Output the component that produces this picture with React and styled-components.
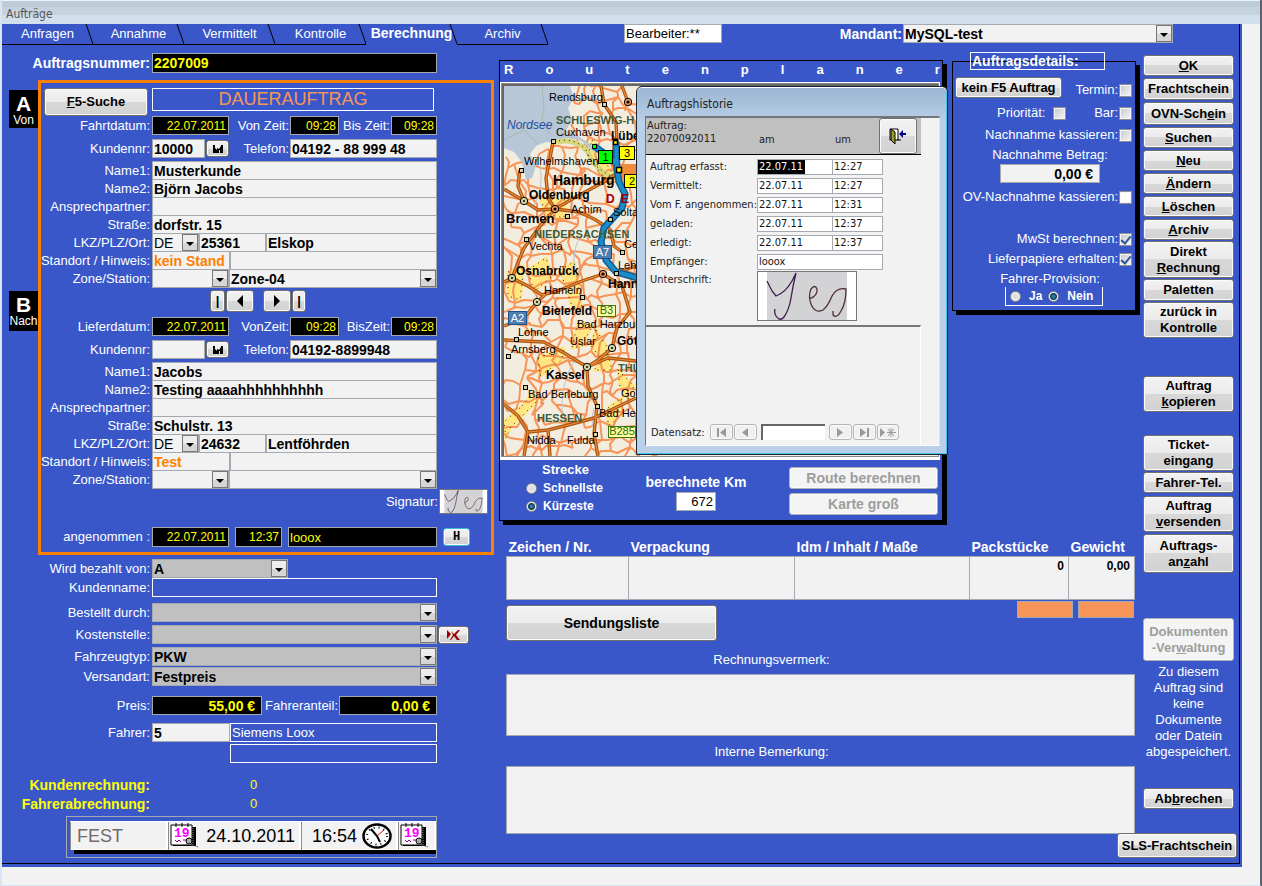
import React from 'react'
import styled, { createGlobalStyle, css } from 'styled-components'

const colors = {
  form: '#3957c9',
  field: '#f2f2f2',
  border: '#a5a9b0',
  gray: '#c0c0c0',
  yellow: '#ffff00',
  orange: '#ff8000',
  peach: '#f79457',
}

const GlobalStyle = createGlobalStyle`
  * {
    box-sizing: border-box;
  }
  body {
    margin: 0;
    background: #f2f2f2;
    font-family: 'Liberation Sans', Arial, sans-serif;
    font-size: 13px;
    line-height: 16px;
  }
  input, select, button, textarea {
    font: inherit;
    color: inherit;
    margin: 0;
    border-radius: 0;
  }
`

/* ---------- window ---------- */

const Window = styled.div`
  display: flex;
  flex-direction: column;
  min-height: 100vh;
  border: solid #d9e6f2;
  border-width: 0 2px 2px;
  border-right-color: #59626e;
`

const TitleBar = styled.header`
  height: 24px;
  padding: 5px 4px 0;
  border-top: 1px solid #eef3f7;
  background: linear-gradient(#bccbd8 0 6px, #c5d3df 6px 14px, #d2e0ed 14px);
  color: #555;
  font-family: 'DejaVu Sans Condensed', 'DejaVu Sans', sans-serif;
  font-size: 12px;
`

const Form = styled.main`
  flex: 1;
  display: flex;
  margin: 0 18px 18px 0;
  padding: 0 2px 3px 0;
  background: ${colors.form};
  color: #fff;
`

const FormInner = styled.div`
  flex: 1;
  display: flex;
  flex-direction: column;
  border: solid #000;
  border-width: 0 1px 1px 0;
`

const Body = styled.div`
  flex: 1;
  display: flex;
`

/* ---------- shared controls ---------- */

const dark = css`
  background: #000;
  color: ${colors.yellow};
`

const Field = styled.input`
  width: ${p => (p.$w ? `${p.$w}px` : 'auto')};
  flex: ${p => (p.$w ? 'none' : '1')};
  min-width: 0;
  height: ${p => p.$h || 19}px;
  padding: 0 2px 0 1px;
  border: 1px solid ${colors.border};
  background: ${colors.field};
  color: ${p => p.$color || '#000'};
  font-size: ${p => p.$size || 14}px;
  font-weight: ${p => (p.$light ? 400 : 700)};
  text-align: ${p => (p.$right ? 'right' : 'left')};
  ${p => p.$dark && dark}
  ${p =>
    p.$outline &&
    css`
      border-color: #fff;
      background: transparent;
      color: #fff;
    `}
`

const SelectBox = styled.span`
  display: grid;
  width: ${p => (p.$w ? `${p.$w}px` : 'auto')};
  flex: ${p => (p.$w ? 'none' : '1')};
  height: 19px;
  > * {
    grid-area: 1 / 1;
  }
  select {
    appearance: none;
    width: 100%;
    padding: 0 18px 0 1px;
    border: 1px solid ${colors.border};
    background: ${p => (p.$gray ? colors.gray : colors.field)};
    color: #000;
    font-size: 14px;
    font-weight: ${p => (p.$light ? 400 : 700)};
  }
`

const Arrow = styled.svg`
  justify-self: end;
  align-self: center;
  margin-right: 1px;
  pointer-events: none;
`

const Select = ({ id, value = '', label, ...rest }) => (
  <SelectBox {...rest}>
    <select id={id} aria-label={label} defaultValue={value}>
      <option>{value}</option>
    </select>
    <Arrow width="16" height="17" viewBox="0 0 16 17">
      <rect x=".5" y=".5" width="15" height="16" fill="#ededed" stroke="#777" />
      <rect x="1" y="9" width="14" height="7" fill="#d6d6d6" />
      <path d="M4 8h8l-4 4z" fill="#000" />
    </Arrow>
  </SelectBox>
)

const Button = styled.button`
  display: flex;
  align-items: center;
  justify-content: center;
  flex: none;
  width: ${p => (p.$w ? `${p.$w}px` : 'auto')};
  height: ${p => p.$h || 21}px;
  margin-top: ${p => p.$top || 0}px;
  padding: 0;
  border: 1px solid #707070;
  border-radius: 3px;
  background: linear-gradient(#f2f2f2, #ebebeb 50%, #d8d8d8 50%, #d2d2d2);
  box-shadow: inset 0 0 0 1px #fbfbfb;
  color: #000;
  font-size: ${p => p.$size || 13}px;
  font-weight: 700;
  line-height: 16px;
  text-align: center;
  white-space: pre-line;
  &:disabled {
    border-color: #adb2b5;
    background: #f4f4f4;
    color: #9d9d9d;
  }
`

const CheckBox = styled.input.attrs({ type: 'checkbox' })`
  appearance: none;
  display: grid;
  place-items: center;
  flex: none;
  width: 13px;
  height: 13px;
  border: 1px solid #8e8f8f;
  background: ${p =>
    p.$plain ? '#fff' : 'linear-gradient(135deg, #c5c9cd, #f6f6f6)'};
  box-shadow: inset 0 0 0 1px #f4f4f4;
  &:checked::after {
    content: '';
    width: 4px;
    height: 8px;
    border: solid #31559b;
    border-width: 0 2px 2px 0;
    transform: rotate(40deg);
  }
`

const Radio = styled.input.attrs({ type: 'radio' })`
  appearance: none;
  flex: none;
  width: 11px;
  height: 11px;
  border: 1px solid #8e8f8f;
  border-radius: 50%;
  background: radial-gradient(#d8d8d8, #f4f4f4);
  &:checked {
    background: radial-gradient(#2b7fb0 0 1px, #16364d 3px, #f4f4f4 4px);
  }
`

/* ---------- header ---------- */

const Header = styled.div`
  display: flex;
  height: 21px;
`

const Tab = styled.button`
  display: flex;
  width: 91px;
  height: 21px;
  padding: 0;
  border: 0;
  border-bottom: 1px solid ${p => (p.$active ? 'transparent' : '#000')};
  background: none;
  font-size: ${p => (p.$active ? 14 : 13)}px;
  font-weight: ${p => (p.$active ? 700 : 400)};
  line-height: 19px;
  span {
    flex: 1;
    margin-right: -5px;
  }
  svg {
    flex: none;
    margin-left: -3px;
  }
`

const Editor = styled(Field)`
  margin-left: 76px;
  background: #fff;
`

const ClientLabel = styled.label`
  margin-left: auto;
  padding: 2px 1px 0 0;
  font-size: 14px;
  font-weight: 700;
`

const ClientSelect = styled.div`
  display: flex;
  width: 270px;
  margin-right: 66px;
`

const TABS = ['Anfragen', 'Annahme', 'Vermittelt', 'Kontrolle', 'Berechnung', 'Archiv']

const Top = () => (
  <Header>
    {TABS.map(name => (
      <Tab key={name} type="button" $active={name === 'Berechnung'}>
        <span>{name}</span>
        <svg width="8" height="20" viewBox="0 0 8 20">
          <path d="M1 0L8 20" stroke="#000" fill="none" />
        </svg>
      </Tab>
    ))}
    <Editor $w={98} $light $size={13} defaultValue="Bearbeiter:**" aria-label="Bearbeiter" />
    <ClientLabel htmlFor="mandant">Mandant:</ClientLabel>
    <ClientSelect>
      <Select id="mandant" value="MySQL-test" />
    </ClientSelect>
  </Header>
)

/* ---------- left column ---------- */

const Left = styled.section`
  flex: none;
  width: 496px;
  display: flex;
  flex-direction: column;
`

const Outer = styled.div`
  padding-left: 39px;
`

const Framed = styled.div`
  display: flex;
  margin-top: 7px;
`

const Side = styled.div`
  width: 36px;
  padding: 10px 0 0 7px;
`

const SideTab = styled.div`
  height: ${p => p.$h}px;
  margin-bottom: 163px;
  padding-top: 4px;
  background: #000;
  font-size: 12px;
  line-height: 14px;
  text-align: center;
  b {
    display: block;
    font-size: 21px;
    line-height: 19px;
  }
`

const Frame = styled.div`
  width: 456px;
  padding: 5px 0 5px;
  border: 3px solid ${colors.orange};
`

const Row = styled.div`
  display: flex;
  align-items: center;
  height: ${p => p.$h || 19}px;
  margin-top: ${p => p.$top || 0}px;
`

const Label = styled.label`
  display: flex;
  justify-content: flex-end;
  flex: none;
  width: ${p => p.$w || 110}px;
  padding-right: 1px;
  white-space: nowrap;
  color: ${p => p.$color || '#fff'};
  font-size: ${p => (p.$bold ? 14 : 13)}px;
  font-weight: ${p => (p.$bold ? 700 : 400)};
`

const Cells = styled.div`
  display: flex;
  align-items: center;
  width: 286px;
  padding-left: 1px;
`

const Banner = styled.div`
  align-self: flex-start;
  width: 282px;
  height: 23px;
  margin-left: 4px;
  border: 1px solid #fff;
  color: ${colors.peach};
  font-size: 18px;
  line-height: 21px;
  text-align: center;
`

const Search = styled(Button)`
  margin-left: 3px;
`

const Merge = styled(Button)`
  margin: 0 1px;
`

const Nav = styled.div`
  display: flex;
  gap: 1px;
  height: 23px;
  margin: 2px 0 0 169px;
  button:nth-child(3) {
    margin-left: 8px;
  }
`

const Text = ({ id, label, value, top = -1 }) => (
  <Row $top={top}>
    <Label htmlFor={id}>{label}</Label>
    <Cells>
      <Field id={id} defaultValue={value} />
    </Cells>
  </Row>
)

const MergeIcon = () => (
  <svg width="12" height="8" viewBox="0 0 12 8">
    <path d="M1 0h2v3l2 2V3l2 1 2-3V0h2v8H8V5H7v3H1z" fill="#000" />
  </svg>
)

const Address = ({ prefix, date, from, to, customer, phone, names, zip, city, hint, zone }) => (
  <>
    <Row $top={prefix === 'b' ? 4 : 0}>
      <Label htmlFor={`${prefix}-date`}>{date}</Label>
      <Cells>
        <Field id={`${prefix}-date`} $w={77} $dark $light $right $size={12} defaultValue="22.07.2011" />
        <Label htmlFor={`${prefix}-from`} $w={61}>{from}</Label>
        <Field id={`${prefix}-from`} $w={49} $dark $light $right $size={12} defaultValue="09:28" />
        <Label htmlFor={`${prefix}-to`} $w={52}>{to}</Label>
        <Field id={`${prefix}-to`} $dark $light $right $size={12} defaultValue="09:28" />
      </Cells>
    </Row>
    <Row $top={4}>
      <Label htmlFor={`${prefix}-nr`}>Kundennr:</Label>
      <Cells>
        <Field id={`${prefix}-nr`} $w={53} defaultValue={customer} />
        <Merge type="button" $w={23} $h={17} aria-label="Kunde suchen">
          <MergeIcon />
        </Merge>
        <Label htmlFor={`${prefix}-phone`} $w={60}>Telefon:</Label>
        <Field id={`${prefix}-phone`} defaultValue={phone} />
      </Cells>
    </Row>
    <Text id={`${prefix}-n1`} label="Name1:" value={names[0]} top={3} />
    <Text id={`${prefix}-n2`} label="Name2:" value={names[1]} />
    <Text id={`${prefix}-contact`} label="Ansprechpartner:" />
    <Text id={`${prefix}-street`} label="Straße:" value={names[2]} />
    <Row $top={-1}>
      <Label htmlFor={`${prefix}-lkz`}>LKZ/PLZ/Ort:</Label>
      <Cells>
        <Select id={`${prefix}-lkz`} $w={47} $light value="DE" />
        <Field $w={67} defaultValue={zip} aria-label="PLZ" />
        <Field defaultValue={city} aria-label="Ort" />
      </Cells>
    </Row>
    <Row $top={-1}>
      <Label htmlFor={`${prefix}-hint`}>Standort / Hinweis:</Label>
      <Cells>
        <Field id={`${prefix}-hint`} $w={78} $color={colors.orange} defaultValue={hint} />
        <Field aria-label="Hinweis" />
      </Cells>
    </Row>
    <Row $top={-1}>
      <Label htmlFor={`${prefix}-zone`}>Zone/Station:</Label>
      <Cells>
        <Select id={`${prefix}-zone`} $w={77} />
        <Select label="Station" value={zone} />
      </Cells>
    </Row>
  </>
)

const Accepted = styled(Row)`
  gap: 6px;
  > label {
    margin-right: -5px;
  }
`

const Signed = styled(Row)`
  justify-content: flex-end;
  padding-right: 3px;
`

const Cyan = styled(Button)`
  border-color: #3cb8dc;
  font-family: 'Liberation Mono', monospace;
`

const SignatureFrame = styled.svg`
  flex: none;
  border: 1px solid #777;
  background: #fff;
`

const Signature = ({ width, height }) => (
  <SignatureFrame width={width} height={height} viewBox="0 0 98 48" role="img" aria-label="Unterschrift">
    <rect x="9" width="80" height="48" fill="#d3d3d5" />
    <g fill="none" strokeWidth="1.3">
      <path d="M9 9L14 19L18 24Q27 21 34 9L38 1Q35 13 33 26Q31 38 26 45Q22 50 18 44Q16 41 17 37" stroke="#3b1c4d" />
      <path d="M51 27Q60 24 59 17Q57 12 53 17Q50 24 53 32Q57 42 65 38Q70 34 74 24Q79 15 88 17Q88 31 83 39Q79 47 75 43L75 39" stroke="#4b3038" />
    </g>
  </SignatureFrame>
)

const Small = styled.span`
  width: 10px;
  color: ${colors.yellow};
  margin-left: 99px;
`

const Bar = styled.div`
  width: 371px;
  margin: 3px 0 0 64px;
  padding: 4px 0 3px 3px;
  border: 1px solid ${colors.border};
`

const BarCells = styled.div`
  display: flex;
  height: 29px;
  border-top: 1px solid #fff;
  background: ${colors.field};
  box-shadow: inset 0 -1px #fff;
  color: #000;
  font-size: 18px;
`

const BarShadow = styled.div`
  height: 4px;
  margin-left: 4px;
  background: #000;
`

const BarCell = styled.div`
  display: flex;
  align-items: center;
  justify-content: ${p => p.$align || 'space-between'};
  flex: ${p => (p.$w ? 'none' : '1')};
  width: ${p => (p.$w ? `${p.$w}px` : 'auto')};
  padding: 0 4px 0 1px;
  border-left: 1px solid #8a8a8a;
  border-right: 2px solid #fff;
  color: ${p => (p.$muted ? '#6d6d6d' : '#000')};
  &:first-child {
    padding-left: 6px;
  }
`

const CalendarButton = styled.button`
  padding: 0;
  border: 0;
  background: none;
  line-height: 0;
`

const Calendar = () => (
  <CalendarButton type="button" aria-label="Kalender">
    <svg width="30" height="26" viewBox="0 0 30 26">
      <path d="M3 4h23v19H3z" fill="#000" />
      <path d="M1 2h21v20H1z" fill="#fff" stroke="#000" />
      <path d="M6 0v4M12 0v4M18 0v4" stroke="#000" />
      <path d="M23 5v18" stroke="#999" strokeDasharray="1 1" />
      <text x="4" y="14" fontFamily="Liberation Mono" fontSize="13" fontWeight="700" fill="#f0f">19</text>
      <path d="M5 17l2 2 2-2 2 2M13 17h3" stroke="#808" fill="none" />
      <circle cx="19" cy="18" r="3" fill="#aaa" stroke="#000" />
      <path d="M16 22l3-2 3 2 6 2" stroke="#555" fill="none" strokeDasharray="2 1" />
    </svg>
  </CalendarButton>
)

const Clock = () => (
  <svg width="30" height="26" viewBox="0 0 30 26">
    <ellipse cx="15" cy="13" rx="13.5" ry="11.5" fill="#fff" stroke="#000" strokeWidth="2.5" />
    <ellipse cx="15" cy="13" rx="10" ry="8.5" fill="none" stroke="#000" strokeWidth="2" strokeDasharray="1 4" />
    <path d="M9 6l6 7 3 6" stroke="#000" strokeWidth="2" fill="none" />
    <path d="M15 13l7-6" stroke="#e00" />
  </svg>
)

const Billing = () => (
  <Outer>
    <Row $top={4}>
      <Label htmlFor="payer">Wird bezahlt von:</Label>
      <Cells><Select id="payer" $w={136} $gray value="A" /></Cells>
    </Row>
    <Row>
      <Label htmlFor="payer-name">Kundenname:</Label>
      <Cells><Field id="payer-name" $outline /></Cells>
    </Row>
    <Row $top={6}>
      <Label htmlFor="ordered">Bestellt durch:</Label>
      <Cells><Select id="ordered" $gray /></Cells>
    </Row>
    <Row $top={3}>
      <Label htmlFor="cost">Kostenstelle:</Label>
      <Cells><Select id="cost" $gray /></Cells>
      <Merge type="button" $w={31} $h={18} aria-label="Kostenstelle löschen">
        <svg width="16" height="10" viewBox="0 0 16 10">
          <path d="M1 0l4 4-4 5zM5 1l3 3 4-4h2l-4 5 4 5h-3L8 6l-3 4H4l3-5z" fill="#900" />
        </svg>
      </Merge>
    </Row>
    <Row $top={3}>
      <Label htmlFor="vehicle">Fahrzeugtyp:</Label>
      <Cells><Select id="vehicle" $gray value="PKW" /></Cells>
    </Row>
    <Row $top={1}>
      <Label htmlFor="shipping">Versandart:</Label>
      <Cells><Select id="shipping" $gray value="Festpreis" /></Cells>
    </Row>
    <Row $top={10}>
      <Label htmlFor="price">Preis:</Label>
      <Cells>
        <Field id="price" $w={110} $dark $right defaultValue="55,00 € " />
        <Label htmlFor="share" $w={77}>Fahreranteil:</Label>
        <Field id="share" $dark $right defaultValue="0,00 € " />
      </Cells>
    </Row>
    <Row $top={8}>
      <Label htmlFor="driver">Fahrer:</Label>
      <Cells>
        <Field id="driver" $w={78} defaultValue="5" />
        <Field $outline $light $size={13} defaultValue="Siemens Loox" aria-label="Fahrername" />
      </Cells>
    </Row>
    <Row $top={2}>
      <Label as="span" $w={188} />
      <Cells as="span"><Field $w={207} $outline aria-label="Fahrer Zusatz" /></Cells>
    </Row>
    <Row $top={12}>
      <Label as="span" $bold $color={colors.yellow}>Kundenrechnung:</Label>
      <Small>0</Small>
    </Row>
    <Row>
      <Label as="span" $bold $color={colors.yellow}>Fahrerabrechnung:</Label>
      <Small>0</Small>
    </Row>
  </Outer>
)

const LeftColumn = () => (
  <Left>
    <Outer>
      <Row $top={8} $h={20}>
        <Label htmlFor="order" $bold>Auftragsnummer:</Label>
        <Cells><Field id="order" $dark $h={20} defaultValue="2207009" /></Cells>
      </Row>
    </Outer>
    <Framed>
      <Side>
        <SideTab $h={38}><b>A</b>Von</SideTab>
        <SideTab $h={40}><b>B</b>Nach</SideTab>
      </Side>
      <Frame>
        <Row $h={28}>
          <Search type="button" $w={104} $h={28}><span><u>F</u>5-Suche</span></Search>
          <Banner>DAUERAUFTRAG</Banner>
        </Row>
        <Address
          prefix="a"
          date="Fahrtdatum:"
          from="Von Zeit:"
          to="Bis Zeit:"
          customer="10000"
          phone="04192 - 88 999 48"
          names={['Musterkunde', 'Björn Jacobs', 'dorfstr. 15']}
          zip="25361"
          city="Elskop"
          hint="kein Stand"
          zone="Zone-04"
        />
        <Nav>
          <Button type="button" $w={15} $h={22} aria-label="Erster">|</Button>
          <Button type="button" $w={28} $h={22} aria-label="Zurück">
            <svg width="8" height="12"><path d="M7 0v12L1 6z" /></svg>
          </Button>
          <Button type="button" $w={28} $h={22} aria-label="Weiter">
            <svg width="8" height="12"><path d="M1 0v12l6-6z" /></svg>
          </Button>
          <Button type="button" $w={14} $h={22} aria-label="Letzter">|</Button>
        </Nav>
        <Address
          prefix="b"
          date="Lieferdatum:"
          from="VonZeit:"
          to="BisZeit:"
          customer=""
          phone="04192-8899948"
          names={['Jacobs', 'Testing aaaahhhhhhhhhh', 'Schulstr. 13']}
          zip="24632"
          city="Lentföhrden"
          hint="Test"
          zone=""
        />
        <Signed $h={25}>
          <Label as="span">Signatur:</Label>
          <Signature width="49" height="25" />
        </Signed>
        <Accepted $top={13} $h={20}>
          <Label htmlFor="accepted">angenommen :</Label>
          <Field id="accepted" $w={77} $h={20} $dark $light $right $size={12} defaultValue="22.07.2011" />
          <Field $w={47} $h={20} $dark $light $right $size={12} defaultValue="12:37" aria-label="Uhrzeit" />
          <Field $w={149} $h={20} $dark $light $size={13} defaultValue="looox" aria-label="Empfänger" />
          <Cyan type="button" $w={27} $h={18} $size={12}>H</Cyan>
        </Accepted>
      </Frame>
    </Framed>
    <Billing />
    <Bar>
      <BarCells>
        <BarCell $w={98} $muted>FEST</BarCell>
        <BarCell $w={133}><Calendar />24.10.2011</BarCell>
        <BarCell $w={97} $align="flex-end">16:54&nbsp;<Clock /></BarCell>
        <BarCell><Calendar /></BarCell>
      </BarCells>
      <BarShadow />
    </Bar>
  </Left>
)

/* ---------- route map ---------- */

// small deterministic generator for the minor road mesh
const noise = (x, y) => {
  const v = Math.sin(x * 127 + y * 311) * 43758
  return v - Math.floor(v)
}

const isSea = (x, y) => (x < 66 && y < 46) || (x < 46 && y < 62) || (x > 10 && x < 30 && y < 94)

const minorRoads = () => {
  const step = 14
  const point = (i, j) => [
    Math.round(i * step + noise(i, j) * 13 - 6),
    Math.round(j * step + noise(j + 40, i) * 13 - 6),
  ]
  let d = ''
  for (let i = 0; i < 11; i += 1) {
    for (let j = 0; j < 27; j += 1) {
      const [x, y] = point(i, j)
      const targets = [point(i + 1, j), point(i, j + 1)]
      targets.forEach(([tx, ty], k) => {
        if (isSea(x, y) || isSea(tx, ty) || noise(i + k * 9, j + 17) < 0.14) return
        const mx = Math.round((x + tx) / 2 + noise(i, j + k) * 8 - 4)
        const my = Math.round((y + ty) / 2 + noise(j, i + k) * 8 - 4)
        d += `M${x} ${y}L${mx} ${my}L${tx} ${ty}`
      })
    }
  }
  return d
}

const MAJOR_ROADS =
  'M49 56L46 72L42 92L44 112L51 123M0 103L20 115L34 124L51 123L75 126L90 133L106 143M20 115L14 100L16 84' +
  'M51 123L70 112L96 98L115 86M51 123L36 140L20 162L8 192L0 196M97 0L100 18L112 36L113 56M124 16L118 0' +
  'M8 192L24 200L38 209L56 204L78 195L99 188M132 180L112 187M0 240L20 232L33 216L44 206M0 254L40 256L62 268L83 281' +
  'M99 188L118 200L126 226L113 242L108 262L94 274L83 281L84 300L93 320L90 348L94 370M83 281L104 272L132 275' +
  'M0 318L14 330L24 346L44 344L68 338L90 332L132 312M24 346L20 370M44 344L46 370M106 143L110 160L118 166'

const WOODS =
  'M88 54L110 90L106 100L84 70ZM36 112L62 114L60 132L42 128ZM24 184L42 172L48 190L30 206Z' +
  'M56 184L70 176L74 196L78 224L68 220ZM34 272L60 262L58 274L36 290ZM74 236L88 240L78 260L68 262Z' +
  'M92 244L104 262L96 272L86 258ZM18 320L30 306L34 314L6 342L2 352L0 336ZM104 268L108 284L90 284Z' +
  'M114 284L130 300L124 314L116 300ZM104 322L118 312L112 334L104 340ZM4 186L20 180L16 214L4 210Z'

const MOTORWAY =
  'M90 60L104 70L113 78M112 56L113 84L115 96L121 108L118 122L100 142L97 156L102 174L112 186L134 192'

const CITIES = [
  ['Rendsburg', 45, 15], ['Cuxhaven', 52, 50], ['Wilhelmshaven', 20, 79], ['Achim', 67, 127],
  ['Solta', 109, 130], ['Vechta', 25, 164], ['Ce', 120, 162], ['Leh', 114, 183], ['Hameln', 40, 208],
  ['Bad Harzbu', 73, 242], ['Lohne', 14, 250], ['Uslar', 66, 259], ['Arnsberg', 7, 267],
  ['Bad Berleburg', 24, 312], ['Go', 117, 311], ['Bad He', 95, 331], ['Nidda', 23, 358],
  ['Fulda', 63, 358],
]

const BIG_CITIES = [
  ['Lübe', 107, 54, 12], ['Hamburg', 49, 99, 14], ['Oldenburg', 25, 113, 12], ['Bremen', 2, 137, 13],
  ['Osnabrück', 12, 189, 12], ['Hann', 104, 202, 12], ['Bielefeld', 38, 229, 12],
  ['Göt', 113, 259, 12], ['Kassel', 42, 293, 12],
]

const STATES = [
  ['SCHLESWIG-H', 52, 38], ['NIEDERSACHSEN', 30, 152], ['THÜ', 114, 286], ['HESSEN', 33, 336],
]

const SQUARES = [
  [100, 18], [49, 55], [17, 84], [63, 130], [106, 133], [22, 153], [118, 166], [112, 187],
  [78, 211], [12, 253], [4, 270], [21, 301], [93, 320], [91, 348],
]

const CIRCLES = [[20, 115], [8, 192], [33, 216], [108, 262], [83, 281]]
const CAPITALS = [[124, 16], [51, 123], [99, 188]]

const SHIELDS = [
  ['A7', 89, 159, 19, 14, '#4f7fb0', '#fff', '#1d4f86'],
  ['A2', 4, 225, 19, 14, '#4f7fb0', '#fff', '#1d4f86'],
  ['B3', 93, 219, 19, 12, '#ffffa0', '#2a6a10', '#3a7a10'],
  ['B285', 104, 340, 28, 12, '#ffffa0', '#2a6a10', '#3a7a10'],
  ['1', 94, 64, 15, 14, '#00ff00', '#000', '#000'],
  ['3', 115, 60, 16, 14, '#ffff00', '#000', '#000'],
  ['2', 120, 88, 16, 14, '#ffff00', '#000', '#000'],
]

const MapSvg = styled.svg`
  display: block;
  background: #f3ede0;
  font-family: 'Liberation Sans', Arial, sans-serif;
  font-size: 11px;
`

const RouteMap = () => (
  <MapSvg width="100%" height="370" role="img" aria-label="Karte">
    <path d={WOODS} fill="#ffe680" stroke="#ffe680" strokeWidth="3" strokeLinejoin="round" />
    <path d={minorRoads()} stroke="#f79457" strokeWidth="2" fill="none" strokeLinejoin="round" />
    <path d="M0 0H66L70 12L64 22L68 34L62 44L74 50L86 58L92 68L76 54L62 52L50 57L42 56L32 60L26 68L32 80L28 92L22 94L18 76L10 66L0 62Z" fill="#b7c7d8" />
    <path d="M38 0L40 20L38 34L46 48M0 54L20 44L34 58M52 12L64 16" stroke="#a9b8a8" fill="none" />
    <path d="M30 120Q40 100 36 80M76 150Q66 170 72 190M92 350Q86 334 90 322M60 340Q52 300 74 270" stroke="#b4c8dc" fill="none" />
    <path d="M50 57Q70 50 84 66Q92 86 114 94" stroke="#d9d77c" strokeWidth="5" fill="none" />
    <path d="M50 56Q70 50 82 64Q90 84 112 92" stroke="#000" fill="none" strokeDasharray="1 4" />
    <path d={WOODS} fill="none" stroke="#222" strokeDasharray="1 5" />
    <path d={MAJOR_ROADS} stroke="#a85510" strokeWidth="3.4" fill="none" strokeLinejoin="round" />
    <path d={MAJOR_ROADS} stroke="#f08a3c" strokeWidth="1.2" fill="none" strokeLinejoin="round" />
    <path d="M106 78h26v14h-20z" fill="#f08a3c" />
    <path d={MOTORWAY} stroke="#0a5f95" strokeWidth="7" fill="none" />
    <path d={MOTORWAY} stroke="#1c8ccb" strokeWidth="4" fill="none" />
    {SQUARES.map(([x, y]) => (
      <rect key={`${x}-${y}`} x={x - 1.5} y={y - 1.5} width="4" height="4" fill="#d4d4a0" stroke="#000" />
    ))}
    {CIRCLES.map(([x, y]) => (
      <g key={`${x}-${y}`}>
        <circle cx={x} cy={y} r="3.7" fill="#d4d4a0" stroke="#000" />
        <circle cx={x} cy={y} r="1" />
      </g>
    ))}
    {CAPITALS.map(([x, y]) => (
      <g key={`${x}-${y}`}>
        <circle cx={x} cy={y} r="3.7" fill="#f79457" stroke="#000" />
        <circle cx={x} cy={y} r="1.6" />
      </g>
    ))}
    <path d="M88.500 58.500h4v4h-4z" fill="#0f0" stroke="#000" />
    <path d="M109.500 54.500h4v4h-4zM112.500 81.500h5v5h-5z" fill="#ff0" stroke="#000" strokeWidth="1.500" />
    <text x="3" y="43" fontSize="12" fontStyle="italic" fill="#1d4f9f">Nordsee</text>
    {STATES.map(([name, x, y]) => (
      <text key={name} x={x} y={y} fontWeight="700" fill="#3c5a3c">{name}</text>
    ))}
    <text x="102" y="117" fontSize="12" fontWeight="700" fill="#a00000">D</text>
    <text x="117" y="117" fontSize="12" fontWeight="700" fill="#a00000">E</text>
    {CITIES.map(([name, x, y]) => (
      <text key={name} x={x} y={y}>{name}</text>
    ))}
    {BIG_CITIES.map(([name, x, y, size]) => (
      <text key={name} x={x} y={y} fontSize={size} fontWeight="700">{name}</text>
    ))}
    {SHIELDS.map(([name, x, y, w, h, fill, ink, line]) => (
      <g key={name}>
        <rect x={x + 0.5} y={y + 0.5} width={w - 1} height={h - 1} fill={fill} stroke={line} />
        <text x={x + w / 2} y={y + h - 3} textAnchor="middle" fill={ink}>{name}</text>
      </g>
    ))}
  </MapSvg>
)

/* ---------- history dialog ---------- */

const Dialog = styled.div`
  position: absolute;
  left: 135px;
  top: 3px;
  z-index: 2;
  width: 312px;
  padding: 0 7px 8px 8px;
  border: 1px solid #1b2733;
  border-radius: 6px 6px 0 0;
  background: linear-gradient(#9bb5d1, #b9d0e8 36px);
  box-shadow: inset 0 1px #fff, inset -1px -1px #48c6e8;
  color: #222;
  font-family: 'DejaVu Sans Condensed', 'DejaVu Sans', sans-serif;
  font-size: 11px;
  line-height: 13px;
  h2 {
    margin: 0;
    padding: 11px 2px 6px;
    font-size: 12px;
    font-weight: 400;
    line-height: 12px;
  }
`

const DialogBody = styled.div`
  padding-right: 18px;
  border: 1px solid #6f7680;
  border-width: 2px 1px 1px 1px;
  border-right-color: #eadde0;
  border-bottom-color: #fff;
  background: #f2f2f2;
`

const DialogHead = styled.div`
  display: grid;
  grid-template-columns: 112px 76px 1fr 38px 4px;
  height: 37px;
  border-bottom: 1px solid #000;
  background: ${colors.gray};
  > span {
    align-self: end;
    padding: 0 0 8px 1px;
  }
  > span:first-child {
    align-self: start;
    padding-top: 1px;
  }
`

const HistoryRow = styled.div`
  display: flex;
  align-items: center;
  height: 19px;
  padding-left: 4px;
  label {
    flex: none;
    width: 107px;
    white-space: nowrap;
  }
  input {
    width: ${p => (p.$wide ? 126 : 76)}px;
    height: 16px;
    padding: 0 1px;
    border: 1px solid ${colors.border};
    background: #fff;
    color: #111;
  }
  input + input {
    width: 51px;
    margin-left: -1px;
  }
  input.selected {
    background: linear-gradient(90deg, #000 47px, #fff 47px);
    color: #fff;
  }
`

const HistoryList = styled.div`
  padding-top: 2px;
`

const SignatureRow = styled(HistoryRow)`
  align-items: flex-start;
  height: 54px;
  span {
    flex: none;
    width: 107px;
    padding-top: 2px;
  }
`

const Navigator = styled.div`
  display: flex;
  align-items: center;
  gap: 1px;
  padding: 97px 0 5px 5px;
  border-top: 2px solid #777;
  border-right: 1px solid #fff;
  label {
    width: 58px;
  }
  input {
    width: 64px;
    height: 16px;
    margin: 0 3px;
    border: solid #666;
    border-width: 2px 0 0 2px;
    background: #fff;
  }
`

const NavButton = styled(Button)`
  border-color: #b5b5b5;
  background: #f0f0f0;
`

const HISTORY = [
  ['Auftrag erfasst:', '22.07.11', '12:27'],
  ['Vermittelt:', '22.07.11', '12:27'],
  ['Vom F. angenommen:', '22.07.11', '12:31'],
  ['geladen:', '22.07.11', '12:37'],
  ['erledigt:', '22.07.11', '12:37'],
]

const NAV_ICONS = {
  Erster: 'M2 1h2v9H2zM11 1v9L5 5.5z',
  Zurück: 'M9 1v9L3 5.5z',
  Nächster: 'M3 1v9l6-4.500z',
  Letzter: 'M2 1v9l6-4.500zM9 1h2v9H9z',
}

const RecordButton = ({ name }) => (
  <NavButton type="button" $w={23} $h={16} aria-label={name}>
    <svg width="13" height="11" fill="#999"><path d={NAV_ICONS[name]} /></svg>
  </NavButton>
)

const History = () => (
  <Dialog role="dialog" aria-label="Auftragshistorie">
    <h2>Auftragshistorie</h2>
    <DialogBody>
      <DialogHead>
        <span>Auftrag:<br />22070092011</span>
        <span>am</span>
        <span>um</span>
        <Button type="button" $h={36} aria-label="Schließen">
          <svg width="18" height="18" viewBox="0 0 18 18">
            <path d="M1 2h8v11H1z" fill="#fff" stroke="#000" />
            <path d="M2 2l4 3v12l-4-4z" fill="#9c9c20" stroke="#000" />
            <path d="M8 13h4" stroke="#000" />
            <path d="M10 7l4-4v3h3v2h-3v3z" fill="#00008b" />
          </svg>
        </Button>
      </DialogHead>
      <HistoryList>
        {HISTORY.map(([label, date, time], i) => (
          <HistoryRow key={label}>
            <label htmlFor={`h-${i}`}>{label}</label>
            <input id={`h-${i}`} className={i === 0 ? 'selected' : undefined} defaultValue={date} />
            <input defaultValue={time} aria-label={`${label} um`} />
          </HistoryRow>
        ))}
        <HistoryRow $wide>
          <label htmlFor="h-receiver">Empfänger:</label>
          <input id="h-receiver" defaultValue="looox" />
        </HistoryRow>
        <SignatureRow>
          <span>Unterschrift:</span>
          <Signature width="100" height="50" />
        </SignatureRow>
      </HistoryList>
      <Navigator>
        <label htmlFor="record">Datensatz:</label>
        <RecordButton name="Erster" />
        <RecordButton name="Zurück" />
        <input id="record" />
        <RecordButton name="Nächster" />
        <RecordButton name="Letzter" />
        <NavButton type="button" $w={22} $h={16} aria-label="Neuer Datensatz">
          <svg width="18" height="11">
            <path d="M1 1v9l5-4.500z" fill="#999" />
            <path d="M12 1v9M8 5.500h9M9 2l6 7M15 2l-6 7" stroke="#999" />
          </svg>
        </NavButton>
      </Navigator>
    </DialogBody>
  </Dialog>
)

/* ---------- center ---------- */

const Center = styled.section`
  flex: 1;
  min-width: 0;
  display: flex;
  flex-direction: column;
  padding-left: 1px;
`

const Panels = styled.div`
  display: flex;
  align-items: flex-start;
  gap: 9px;
  padding: 15px 7px 0 0;
`

const Route = styled.section`
  flex: 1;
  border: 1px solid #000;
  box-shadow: 4px 4px #000;
`

const Spread = styled.h2`
  display: flex;
  justify-content: space-between;
  height: 21px;
  margin: 0;
  padding: 1px 2px 0 4px;
  font-size: 13px;
  line-height: 16px;
`

const MapArea = styled.div`
  position: relative;
  padding: 1px;
  margin-right: 2px;
  border: 1px solid #fff;
  border-bottom-width: 3px;
  background: #8b8b8b;
`

const MapClip = styled.div`
  overflow: hidden;
  border: solid #666;
  border-width: 2px 0 0 2px;
`

const Options = styled.div`
  display: flex;
  padding: 2px 4px 5px 26px;
`

const RouteType = styled.div`
  display: flex;
  flex-direction: column;
  width: 102px;
  gap: 2px;
  font-weight: 700;
  b {
    padding-left: 16px;
  }
  label {
    display: flex;
    align-items: center;
    gap: 6px;
    font-size: 12px;
  }
`

const Distance = styled.div`
  display: flex;
  flex-direction: column;
  align-items: center;
  gap: 2px;
  width: 136px;
  padding-top: 12px;
  font-size: 14px;
  font-weight: 700;
  input {
    background: #fff;
  }
`

const RouteActions = styled.div`
  display: flex;
  flex-direction: column;
  flex: 1;
  gap: 4px;
  padding: 5px 0 0 25px;
`

const Details = styled.section`
  flex: none;
  width: 184px;
  margin-top: 1px;
  padding-bottom: 4px;
  border: 1px solid #000;
  box-shadow: 4px 4px #000;
  h2 {
    width: 135px;
    height: 18px;
    margin: -10px 0 7px 17px;
    padding-left: 1px;
    border: 1px solid #fff;
    font-size: 14px;
    line-height: 17px;
  }
`

const Check = styled.label`
  display: flex;
  align-items: center;
  justify-content: flex-end;
  gap: ${p => p.$gap || 1}px;
  height: ${p => p.$h || 20}px;
  margin-top: ${p => p.$top || 0}px;
  padding-right: 3px;
  white-space: nowrap;
`

const Pair = styled.div`
  display: flex;
  justify-content: space-between;
  padding-left: ${p => p.$left || 0}px;
  > label:first-child {
    padding-right: 0;
  }
`

const Caption = styled.label`
  display: block;
  margin-top: ${p => p.$top || 0}px;
  padding-left: 12px;
  text-align: center;
`

const Amount = styled(Field)`
  display: block;
  margin: 1px 0 2px 47px;
`

const Commission = styled.div`
  display: flex;
  align-items: center;
  gap: 6px;
  width: 98px;
  height: 19px;
  margin-left: 52px;
  padding-left: 4px;
  border: 1px solid #fff;
  border-top: 0;
  font-size: 12px;
  font-weight: 700;
  label {
    display: flex;
    align-items: center;
    gap: 8px;
  }
`

const DetailsPanel = () => (
  <Details>
    <h2>Auftragsdetails:</h2>
    <Pair $left={2}>
      <Button type="button" $w={107} $h={21}>kein F5 Auftrag</Button>
      <Check $h={26}>Termin: <CheckBox /></Check>
    </Pair>
    <Pair $left={44}>
      <Check $gap={8}>Priorität: <CheckBox /></Check>
      <Check>Bar: <CheckBox /></Check>
    </Pair>
    <Check $h={24}>Nachnahme kassieren: <CheckBox /></Check>
    <Caption htmlFor="amount">Nachnahme Betrag:</Caption>
    <Amount id="amount" $w={100} $right defaultValue="0,00 € " />
    <Check $h={24}>OV-Nachnahme kassieren: <CheckBox $plain /></Check>
    <Check $top={20}>MwSt berechnen: <CheckBox defaultChecked /></Check>
    <Check>Lieferpapiere erhalten: <CheckBox defaultChecked /></Check>
    <Caption as="div" $top={2}>Fahrer-Provision:</Caption>
    <Commission>
      <label><Radio name="commission" /> Ja</label>
      <label><Radio name="commission" defaultChecked /> Nein</label>
    </Commission>
  </Details>
)

const Lower = styled.div`
  display: flex;
  flex-direction: column;
  align-items: flex-start;
  padding: 17px 8px 0 7px;
`

const Table = styled.table`
  width: 100%;
  border-collapse: collapse;
  table-layout: fixed;
  font-size: 14px;
  th {
    height: 18px;
    padding: 0 0 0 2px;
    font-size: 14px;
    text-align: left;
  }
  td {
    height: 43px;
    padding: 1px 4px;
    border: 1px solid ${colors.border};
    background: ${colors.field};
    color: #000;
    font-size: 12px;
    font-weight: 700;
    text-align: right;
    vertical-align: top;
  }
`

const Totals = styled.div`
  display: flex;
  align-self: flex-end;
  gap: 5px;
  margin: 1px 1px -13px 0;
  span {
    width: 56px;
    height: 17px;
    border: 1px solid ${colors.border};
    background: ${colors.peach};
  }
`

const NoteLabel = styled.label`
  align-self: center;
  margin-top: ${p => p.$top}px;
  padding-right: 98px;
`

const Note = styled.textarea`
  display: block;
  width: 100%;
  height: ${p => p.$h}px;
  margin-top: 6px;
  border: 1px solid ${colors.border};
  background: ${colors.field};
  color: #000;
  resize: none;
`

const CenterColumn = () => (
  <Center>
    <Panels>
      <Route>
        <Spread>
          {'Routenplaner'.split('').map((letter, i) => (
            <span key={`${letter}${i}`}>{letter}</span>
          ))}
        </Spread>
        <MapArea>
          <MapClip><RouteMap /></MapClip>
          <History />
        </MapArea>
        <Options>
          <RouteType>
            <b>Strecke</b>
            <label><Radio name="route" /> Schnellste</label>
            <label><Radio name="route" defaultChecked /> Kürzeste</label>
          </RouteType>
          <Distance>
            <label htmlFor="km">berechnete Km</label>
            <Field id="km" $w={40} $light $right $size={13} defaultValue="672" />
          </Distance>
          <RouteActions>
            <Button type="button" $h={22} $size={14} disabled>Route berechnen</Button>
            <Button type="button" $h={22} $size={14} disabled>Karte groß</Button>
          </RouteActions>
        </Options>
      </Route>
      <DetailsPanel />
    </Panels>
    <Lower>
      <Table>
        <colgroup>
          <col width="122" />
          <col width="166" />
          <col />
          <col width="99" />
          <col width="66" />
        </colgroup>
        <thead>
          <tr>
            <th>Zeichen / Nr.</th>
            <th>Verpackung</th>
            <th>Idm / Inhalt / Maße</th>
            <th>Packstücke</th>
            <th>Gewicht</th>
          </tr>
        </thead>
        <tbody>
          <tr>
            <td />
            <td />
            <td />
            <td>0</td>
            <td>0,00</td>
          </tr>
        </tbody>
      </Table>
      <Totals><span /><span /></Totals>
      <Button type="button" $w={211} $h={36} $size={14}>Sendungsliste</Button>
      <NoteLabel htmlFor="note" $top={11}>Rechnungsvermerk:</NoteLabel>
      <Note id="note" $h={62} />
      <NoteLabel htmlFor="internal" $top={8}>Interne Bemerkung:</NoteLabel>
      <Note id="internal" $h={68} />
    </Lower>
  </Center>
)

/* ---------- right column ---------- */

const Actions = styled.aside`
  flex: none;
  display: flex;
  flex-direction: column;
  width: 96px;
  padding: 10px 5px 5px 0;
  p {
    margin: 3px 0 0;
    text-align: center;
  }
`

const Wide = styled(Button)`
  align-self: flex-end;
  width: 120px;
  margin-right: -3px;
`

const RightColumn = () => (
  <Actions>
    <Button type="button" $h={21}><span><u>O</u>K</span></Button>
    <Button type="button" $h={22} $top={2}>Frachtschein</Button>
    <Button type="button" $h={23} $top={2}><span>OVN-Sch<u>e</u>in</span></Button>
    <Button type="button" $top={2}><span><u>S</u>uchen</span></Button>
    <Button type="button" $top={2}><span><u>N</u>eu</span></Button>
    <Button type="button" $top={2}><span><u>Ä</u>ndern</span></Button>
    <Button type="button" $top={2}><span><u>L</u>öschen</span></Button>
    <Button type="button" $top={2}><span><u>A</u>rchiv</span></Button>
    <Button type="button" $h={37} $top={1}><span>Direkt<br /><u>R</u>echnung</span></Button>
    <Button type="button" $h={22} $top={1}>Paletten</Button>
    <Button type="button" $h={36} $top={1}><span>zurück in<br />Kontrolle</span></Button>
    <Button type="button" $h={36} $top={38}><span>Auftrag<br /><u>k</u>opieren</span></Button>
    <Button type="button" $h={36} $top={23}><span>Ticket-<br />ein<u>g</u>ang</span></Button>
    <Button type="button" $h={21} $top={1}>Fahrer-Tel.</Button>
    <Button type="button" $h={36} $top={3}><span>Auftrag<br /><u>v</u>ersenden</span></Button>
    <Button type="button" $h={39} $top={2}><span>Auftrags-<br />an<u>z</u>ahl</span></Button>
    <Button type="button" $h={43} $top={45} disabled><span>Dokumenten<br />-Ver<u>w</u>altung</span></Button>
    <p>Zu diesem<br />Auftrag sind<br />keine<br />Dokumente<br />oder Datein<br />abgespeichert.</p>
    <Button type="button" $h={21} $top={28}><span>Ab<u>b</u>rechen</span></Button>
    <Wide type="button" $h={25} $top={24}>SLS-Frachtschein</Wide>
  </Actions>
)

const App = () => (
  <Window>
    <GlobalStyle />
    <TitleBar>Aufträge</TitleBar>
    <Form>
      <FormInner>
        <Top />
        <Body>
          <LeftColumn />
          <CenterColumn />
          <RightColumn />
        </Body>
      </FormInner>
    </Form>
  </Window>
)

export default App
